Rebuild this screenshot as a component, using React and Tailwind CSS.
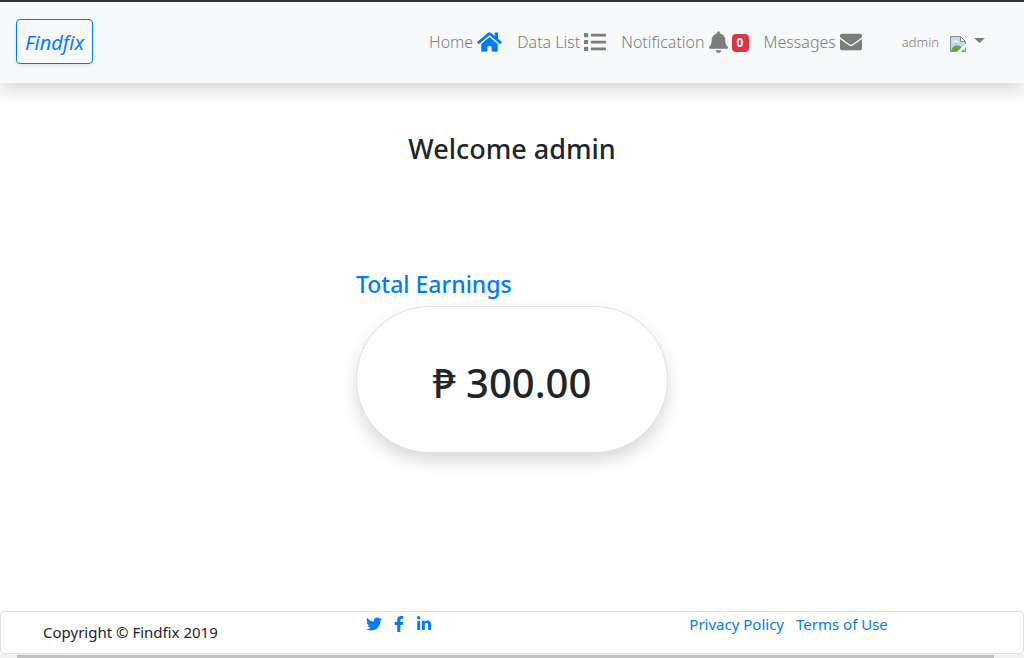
import { FaHome, FaList, FaBell, FaEnvelope, FaTwitter, FaFacebookF, FaLinkedinIn } from 'react-icons/fa';

const navLinks = [
  { label: 'Home', Icon: FaHome, iconClass: 'w-[25px] text-[#007bff]' },
  { label: 'Data List', Icon: FaList, iconClass: 'w-[22px]' },
  { label: 'Notification', Icon: FaBell, iconClass: 'w-[19px]', count: 0 },
  { label: 'Messages', Icon: FaEnvelope, iconClass: 'w-[22px]' },
];

const socialLinks = [
  { label: 'Twitter', Icon: FaTwitter },
  { label: 'Facebook', Icon: FaFacebookF },
  { label: 'LinkedIn', Icon: FaLinkedinIn },
];

function AvatarPlaceholder() {
  return (
    <svg className="mt-0.5 size-4" viewBox="0 0 16 16" aria-hidden="true">
      <path d="M.5.5h10l5 5v10H.5z" fill="#fff" />
      <path d="M1 1h9.500v5H15v9H1z" fill="#c3d6f7" />
      <path d="M3 6.200c0-1 .9-1.400 1.500-1.200C4.800 3.700 7 3.700 7.200 5c.8 0 1.200.5 1.200 1.200z" fill="#fff" />
      <path d="M1 15c.7-3.500 3-5.500 6-5.500s6 2 7 5.500z" fill="#56ae35" />
      <path d="M6.500 16 16 7.500v3.500L10.500 16z" fill="#f8f9fa" />
      <path d="M7 15.500H.5V.5h10l5 5v2.500M10.500.5v5h5M15.500 11.500v4h-4" fill="none" stroke="#8c8c8c" />
    </svg>
  );
}

function Header() {
  return (
    <header className="relative flex h-[83px] shrink-0 items-center justify-between border-t-2 border-[#343438] bg-[#f8f9fa] pr-[39px] pb-0.5 pl-4 shadow-[0_8px_16px_rgba(0,0,0,0.15)]">
      <a
        href="#"
        className="flex h-[45px] items-center rounded border border-[#007bff] px-2 pt-0.5 text-xl text-[#007bff] italic shadow-[0_2px_4px_rgba(0,0,0,0.075)]"
      >
        Findfix
      </a>
      <div className="flex items-center">
        <nav className="flex items-center gap-[15px]">
          {navLinks.map(({ label, Icon, iconClass, count }) => (
            <a key={label} href="#" className="flex items-center gap-1 font-light text-[#7c7d7d]">
              {label}
              <Icon className={`h-[22px] shrink-0 ${iconClass}`} />
              {count !== undefined && (
                <span className="mt-0.5 flex h-[18px] w-[17px] items-center justify-center rounded bg-[#dc3545] text-xs font-bold text-white">
                  {count}
                </span>
              )}
            </a>
          ))}
        </nav>
        <button type="button" className="ml-10 flex items-center pt-0.5 text-[13px] font-light text-[#7c7d7d]">
          <span className="mr-[11px]">admin</span>
          <AvatarPlaceholder />
          <svg className="mb-1 ml-2 h-[5px] w-[11px]" viewBox="0 0 11 5" aria-hidden="true">
            <path d="M0 0h11L5.500 5z" fill="currentColor" />
          </svg>
        </button>
      </div>
    </header>
  );
}

function Footer() {
  return (
    <footer className="shrink-0">
      <div className="grid h-[43px] grid-cols-3 rounded border border-[#dfdfdf] text-[15px] leading-6">
        <p className="self-center pb-0.5 pl-[42px] text-[#212529]">Copyright © Findfix 2019</p>
        <div className="flex h-6 items-center gap-[9px] pl-6 text-[#007bff]">
          {socialLinks.map(({ label, Icon }) => (
            <a key={label} href="#" aria-label={label}>
              <Icon className="size-4" />
            </a>
          ))}
        </div>
        <div className="flex gap-3 pl-[7px] text-[#007bff]">
          <a href="#">Privacy Policy</a>
          <a href="#">Terms of Use</a>
        </div>
      </div>
      <div className="h-1 bg-[#f1f1f1] pt-px pr-[30px] pl-[17px]">
        <div className="h-[3px] bg-[#c1c1c1]" />
      </div>
    </footer>
  );
}

export default function App() {
  return (
    <div className="flex min-h-screen flex-col bg-white font-['Noto_Sans','Open_Sans',sans-serif] text-[#212529]">
      <Header />
      <main className="flex grow flex-col items-center pt-12">
        <h1 className="text-[27px] leading-9 font-medium">Welcome admin</h1>
        <section className="mt-[101px] w-[312px]">
          <h2 className="text-[23px] leading-8 font-medium text-[#007bff]">Total Earnings</h2>
          <div className="mt-1.5 flex h-[147px] items-center justify-center rounded-[80px] border border-[#dee2e6] bg-white pt-1.5 shadow-[0_8px_16px_rgba(0,0,0,0.15)]">
            <p className="text-[40px] font-medium">₱ 300.00</p>
          </div>
        </section>
      </main>
      <Footer />
    </div>
  );
}
